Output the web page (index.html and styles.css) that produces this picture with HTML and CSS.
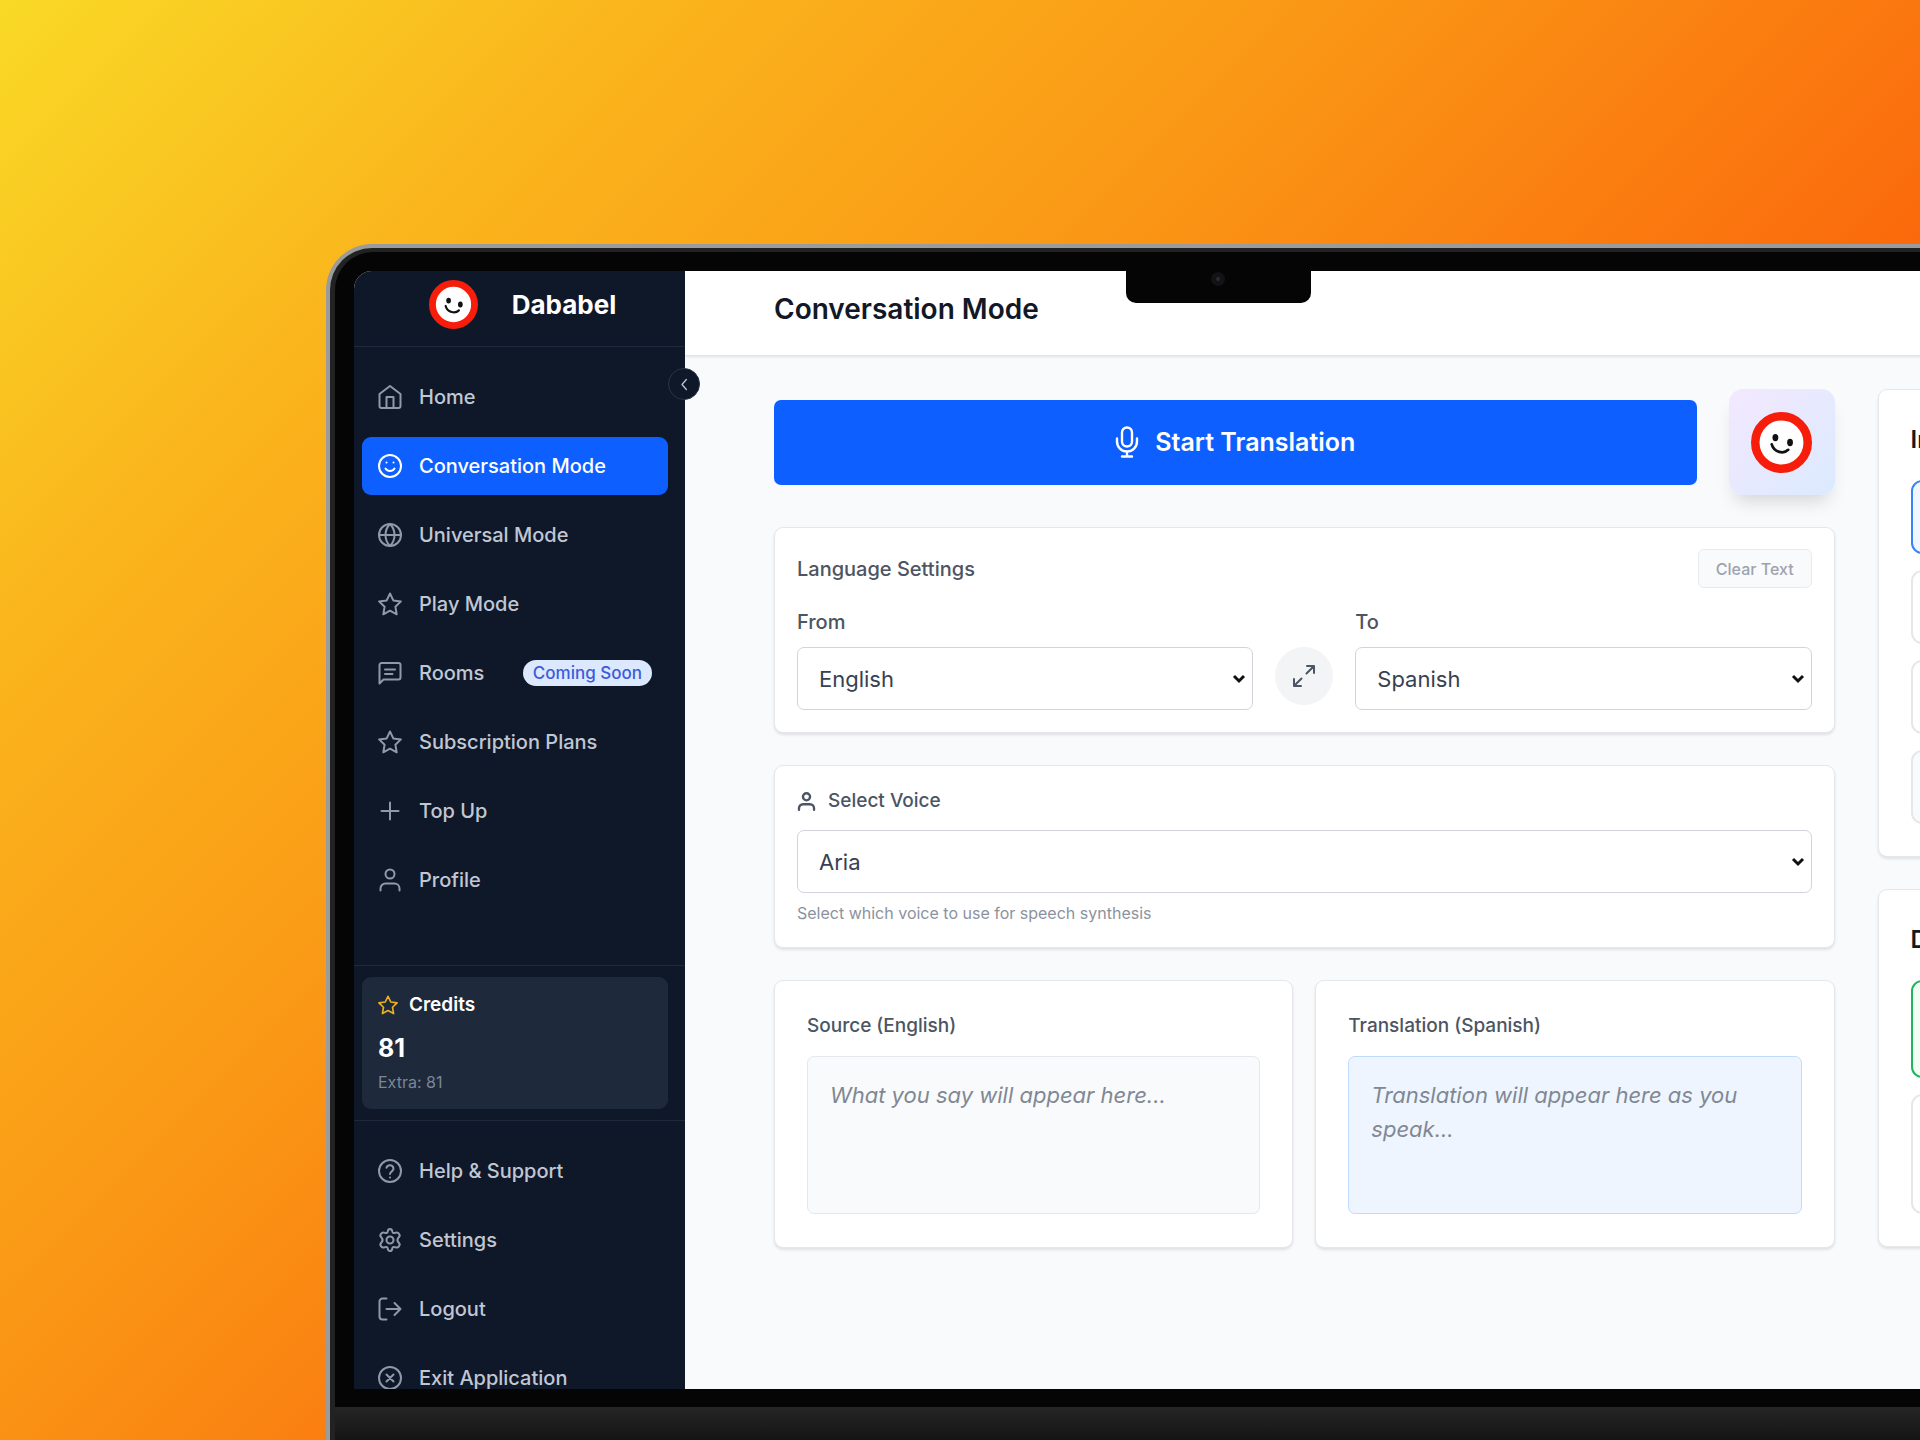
FILE: index.html
```html
<!DOCTYPE html>
<html lang="en">
<head>
    <meta charset="UTF-8">
    <meta name="viewport" content="width=device-width, initial-scale=1.0">
    <title>Dababel - Conversation Mode</title>
    <link rel="stylesheet" href="styles.css">
</head>
<body>
    <div class="laptop">
        <div class="bezel">
            <div class="notch"><span class="camera"></span></div>
            <div class="screen">
                <aside class="sidebar">
                    <div class="brand">
                        <svg class="brand-logo" viewBox="0 0 50 50">
                            <circle cx="25" cy="25" r="21.5" fill="#fff" stroke="#f71d0b" stroke-width="7"/>
                            <ellipse cx="20" cy="21" rx="2.4" ry="3" fill="#111"/>
                            <ellipse cx="32" cy="25" rx="2.4" ry="3" fill="#111"/>
                            <path d="M17 26.500c2 7 10 8 13.500 4.500" fill="none" stroke="#111" stroke-width="2.200" stroke-linecap="round"/>
                        </svg>
                        <span class="brand-name">Dababel</span>
                    </div>

                    <button class="collapse" aria-label="Collapse sidebar">
                        <svg class="icon" viewBox="0 0 24 24"><path d="M15 4l-7 8 7 8"/></svg>
                    </button>

                    <nav class="nav nav-main">
                        <a class="nav-item" href="#">
                            <svg class="icon" viewBox="0 0 24 24"><path d="M1.500 9L12 1l10.500 8v12a2 2 0 0 1-2 2h-17a2 2 0 0 1-2-2z"/><path d="M8.500 23V12h7v11"/></svg>
                            <span>Home</span>
                        </a>
                        <a class="nav-item active" href="#">
                            <svg class="icon" viewBox="0 0 24 24"><circle cx="12" cy="12" r="11"/><path d="M7.500 14.500s1.500 2.500 4.500 2.500 4.500-2.500 4.500-2.500M8.500 8.500h.01M15.500 8.500h.01"/></svg>
                            <span>Conversation Mode</span>
                        </a>
                        <a class="nav-item" href="#">
                            <svg class="icon" viewBox="0 0 24 24"><circle cx="12" cy="12" r="11"/><path d="M1 12h22M12 1c6 6 6 16 0 22M12 1c-6 6-6 16 0 22"/></svg>
                            <span>Universal Mode</span>
                        </a>
                        <a class="nav-item" href="#">
                            <svg class="icon" viewBox="0 0 24 24"><path d="M12 1.500l3.300 6.900 7.600 1-5.500 5.300 1.300 7.600-6.700-3.600-6.700 3.600 1.300-7.600L1.100 9.400l7.600-1z"/></svg>
                            <span>Play Mode</span>
                        </a>
                        <a class="nav-item" href="#">
                            <svg class="icon" viewBox="0 0 24 24"><path d="M1.500 22.500V4a2 2 0 0 1 2-2h17a2 2 0 0 1 2 2v12.500a2 2 0 0 1-2 2h-15z"/><path d="M7 8.500h10M7 13h7.500"/></svg>
                            <span>Rooms</span>
                            <span class="badge">Coming Soon</span>
                        </a>
                        <a class="nav-item" href="#">
                            <svg class="icon" viewBox="0 0 24 24"><path d="M12 1.500l3.300 6.900 7.600 1-5.500 5.300 1.300 7.600-6.700-3.600-6.700 3.600 1.300-7.600L1.100 9.400l7.600-1z"/></svg>
                            <span>Subscription Plans</span>
                        </a>
                        <a class="nav-item" href="#">
                            <svg class="icon" viewBox="0 0 24 24"><path d="M12 3.500v17M3.500 12h17"/></svg>
                            <span>Top Up</span>
                        </a>
                        <a class="nav-item" href="#">
                            <svg class="icon" viewBox="0 0 24 24"><circle cx="12" cy="6" r="4.500"/><path d="M2.500 22.500v-2a5 5 0 0 1 5-5h9a5 5 0 0 1 5 5v2"/></svg>
                            <span>Profile</span>
                        </a>
                    </nav>

                    <div class="credits-wrap">
                        <div class="credits">
                            <div class="credits-title">
                                <svg class="icon" viewBox="0 0 24 24"><path d="M12 1.500l3.300 6.900 7.600 1-5.500 5.300 1.300 7.600-6.700-3.600-6.700 3.600 1.300-7.600L1.100 9.400l7.600-1z"/></svg>
                                <span>Credits</span>
                            </div>
                            <div class="credits-value">81</div>
                            <div class="credits-extra">Extra: 81</div>
                        </div>
                    </div>

                    <nav class="nav">
                        <a class="nav-item" href="#">
                            <svg class="icon" viewBox="0 0 24 24"><circle cx="12" cy="12" r="11"/><path d="M8.500 8.700a3.600 3.600 0 0 1 7 1.100c0 2.400-3.500 3-3.500 5.200M12 18.500h.01"/></svg>
                            <span>Help &amp; Support</span>
                        </a>
                        <a class="nav-item" href="#">
                            <svg class="icon" viewBox="0 0 24 24"><circle cx="12" cy="12" r="3.500"/><path d="M9.700 3.500Q10 1 12 1t2.300 2.500q.3 2.200 2.600 1.400Q19.500 3.700 20.900 5.600q1.700 2.100-.3 3.800-2.400 2.600 0 5.200 2 1.700.3 3.800-1.400 1.900-4 .7-2.300-.8-2.600 1.400Q14 23 12 23t-2.300-2.500q-.3-2.200-2.600-1.400-2.600 1.200-4-.7-1.700-2.100.3-3.800 2.400-2.600 0-5.200-2-1.700-.3-3.800 1.400-1.900 4-.7 2.300.8 2.600-1.400z"/></svg>
                            <span>Settings</span>
                        </a>
                        <a class="nav-item" href="#">
                            <svg class="icon" viewBox="0 0 24 24"><path d="M8.500 1.500h-4a3 3 0 0 0-3 3v15a3 3 0 0 0 3 3h4M8.500 12h14M16.500 6l6 6-6 6"/></svg>
                            <span>Logout</span>
                        </a>
                        <a class="nav-item" href="#">
                            <svg class="icon" viewBox="0 0 24 24"><circle cx="12" cy="12" r="11"/><path d="M8.500 8.500l7 7M15.500 8.500l-7 7"/></svg>
                            <span>Exit Application</span>
                        </a>
                    </nav>
                </aside>

                <main class="main">
                    <header class="page-header">
                        <h1>Conversation Mode</h1>
                    </header>

                    <div class="content">
                        <div class="column">
                            <div class="start-row">
                                <button class="start-button">
                                    <svg class="mic" viewBox="0 0 24 32"><rect x="7" y="1.500" width="10" height="19" rx="5"/><path d="M2 12.500v3a10 10 0 0 0 20 0v-3M12 26v4M7 30.500h10"/></svg>
                                    <span>Start Translation</span>
                                </button>
                                <div class="avatar">
                                    <svg viewBox="0 0 50 50">
                                        <circle cx="25" cy="25" r="21.500" fill="#fff" stroke="#f71d0b" stroke-width="7"/>
                                        <ellipse cx="20" cy="21" rx="2.400" ry="3" fill="#111"/>
                                        <ellipse cx="32" cy="25" rx="2.400" ry="3" fill="#111"/>
                                        <path d="M17 26.500c2 7 10 8 13.500 4.500" fill="none" stroke="#111" stroke-width="2.200" stroke-linecap="round"/>
                                    </svg>
                                </div>
                            </div>

                            <section class="card">
                                <div class="card-head">
                                    <h2 class="label">Language Settings</h2>
                                    <button class="clear-button">Clear Text</button>
                                </div>
                                <div class="languages">
                                    <div class="field">
                                        <label class="label" for="from">From</label>
                                        <select id="from"><option>English</option></select>
                                    </div>
                                    <button class="swap" aria-label="Swap languages">
                                        <svg class="icon" viewBox="0 0 24 24"><path d="M14.500 9.500L22 2M15 2h7v7M9.500 14.500L2 22M2 15v7h7"/></svg>
                                    </button>
                                    <div class="field">
                                        <label class="label" for="to">To</label>
                                        <select id="to"><option>Spanish</option></select>
                                    </div>
                                </div>
                            </section>

                            <section class="card field">
                                <label class="label voice-label" for="voice">
                                    <svg class="icon" viewBox="0 0 24 24"><circle cx="12" cy="6" r="4.500"/><path d="M2.500 22.500v-2a5 5 0 0 1 5-5h9a5 5 0 0 1 5 5v2"/></svg>
                                    Select Voice
                                </label>
                                <select id="voice"><option>Aria</option></select>
                                <p class="hint">Select which voice to use for speech synthesis</p>
                            </section>

                            <div class="texts">
                                <section class="card text-card">
                                    <label class="label" for="source">Source (English)</label>
                                    <textarea id="source" placeholder="What you say will appear here..."></textarea>
                                </section>
                                <section class="card text-card">
                                    <label class="label" for="translation">Translation (Spanish)</label>
                                    <textarea id="translation" class="translated" placeholder="Translation will appear here as you speak..."></textarea>
                                </section>
                            </div>
                        </div>

                        <div class="column side">
                            <section class="card side-card">
                                <h2>In</h2>
                                <button class="option selected" aria-label="Option 1"></button>
                                <button class="option" aria-label="Option 2"></button>
                                <button class="option" aria-label="Option 3"></button>
                                <button class="option disabled" aria-label="Option 4"></button>
                            </section>
                            <section class="card side-card">
                                <h2>D</h2>
                                <button class="option tall green" aria-label="Option 1"></button>
                                <button class="option taller" aria-label="Option 2"></button>
                            </section>
                        </div>
                    </div>
                </main>
            </div>
        </div>
        <div class="chin"></div>
    </div>
</body>
</html>
```
FILE: styles.css
```css
* {
    box-sizing: border-box;
}

body {
    margin: 0;
    height: 100vh;
    padding: 244px 0 0 326px;
    overflow: hidden;
    background: linear-gradient(135deg, #f9d926 0%, #fab41c 20%, #fa9a16 38%, #fa680c 65%, #f75a0c 100%);
    font-family: "Inter", "Liberation Sans", sans-serif;
    color: #374151;
}

h1,
h2,
p {
    margin: 0;
}

button,
select,
textarea {
    font-family: inherit;
    color: inherit;
}

.icon {
    width: 24px;
    height: 24px;
    flex: none;
    fill: none;
    stroke: currentColor;
    stroke-width: 2;
    stroke-linecap: round;
    stroke-linejoin: round;
}

/* Laptop frame */

.laptop {
    display: flex;
    flex-direction: column;
    width: 93vw;
    height: 100%;
    border: 4px solid #9a9b9d;
    border-bottom: none;
    border-radius: 46px 46px 0 0;
    background: #222;
    padding: 4px 5px 0;
}

.bezel {
    position: relative;
    flex: 1;
    min-height: 0;
    padding: 19px 19px 18px;
    background: #050505;
    border-radius: 38px 38px 0 0;
}

.notch {
    position: absolute;
    top: 18px;
    left: 50%;
    z-index: 2;
    width: 185px;
    height: 33px;
    margin-left: -93px;
    padding-top: 2px;
    background: #050505;
    border-radius: 0 0 10px 10px;
}

.camera {
    display: block;
    width: 14px;
    height: 14px;
    margin: 0 auto;
    border: 5px solid #131315;
    border-radius: 50%;
    background: #2b2b30;
}

.chin {
    flex: none;
    height: 33px;
    background: linear-gradient(#262626, #141414);
}

.screen {
    display: flex;
    height: 100%;
    overflow: hidden;
    border-radius: 18px 18px 0 0;
    background: #f9fafb;
}

/* Sidebar */

.sidebar {
    position: relative;
    flex: none;
    width: 331px;
    background: #0f1829;
    color: #c0c7d3;
}

.brand {
    display: flex;
    align-items: center;
    justify-content: center;
    gap: 34px;
    height: 76px;
    padding: 0 0 8px 6px;
    border-bottom: 1px solid #1e293b;
}

.brand-logo {
    width: 49px;
    height: 49px;
}

.brand-name {
    font-size: 26px;
    font-weight: 700;
    color: #fff;
}

.collapse {
    position: absolute;
    top: 97px;
    right: -15px;
    z-index: 1;
    display: flex;
    align-items: center;
    justify-content: center;
    width: 32px;
    height: 32px;
    padding: 0;
    border: 1px solid #283447;
    border-radius: 50%;
    background: #0f1829;
    color: #c0c7d3;
}

.collapse .icon {
    width: 15px;
    height: 15px;
}

.nav {
    display: flex;
    flex-direction: column;
    gap: 11px;
    padding: 21px 17px 21px 8px;
}

.nav-main {
    padding-bottom: 56px;
}

.nav-item {
    display: flex;
    align-items: center;
    gap: 17px;
    height: 58px;
    padding: 0 16px;
    border-radius: 9px;
    font-size: 20px;
    font-weight: 500;
    color: inherit;
    text-decoration: none;
}

.nav-item .icon {
    color: #8f99a9;
}

.nav-item.active,
.nav-item.active .icon {
    background: #0d5fff;
    color: #fff;
}

.badge {
    margin-left: auto;
    padding: 0 10px;
    border-radius: 13px;
    background: #dbe8fe;
    color: #3b5bdb;
    font-size: 17px;
    line-height: 26px;
    white-space: nowrap;
}

.credits-wrap {
    padding: 11px 17px 11px 8px;
    border-top: 1px solid #1e293b;
    border-bottom: 1px solid #1e293b;
}

.credits {
    padding: 14px 16px;
    border-radius: 9px;
    background: #1e293b;
}

.credits-title {
    display: flex;
    align-items: center;
    gap: 11px;
    font-size: 19px;
    font-weight: 600;
    line-height: 28px;
    color: #fff;
}

.credits-title .icon {
    width: 20px;
    height: 20px;
    color: #eab020;
}

.credits-value {
    margin-top: 11px;
    font-size: 25px;
    font-weight: 700;
    line-height: 36px;
    color: #fff;
}

.credits-extra {
    margin-top: 4px;
    font-size: 16px;
    line-height: 25px;
    color: #7b8698;
}

/* Main area */

.main {
    flex: 1;
    min-width: 0;
}

.page-header {
    display: flex;
    align-items: center;
    height: 85px;
    padding: 0 89px 8px;
    border-bottom: 1px solid #e2e4e7;
    background: #fff;
    box-shadow: 0 1px 3px rgba(0, 0, 0, 0.1);
}

.page-header h1 {
    font-size: 28px;
    font-weight: 600;
    color: #111827;
}

.content {
    display: grid;
    grid-template-columns: minmax(0, 1fr) 182px;
    align-items: start;
    gap: 43px;
    padding: 33px 24px 33px 89px;
}

.column {
    display: flex;
    flex-direction: column;
    gap: 32px;
}

.start-row {
    display: flex;
    align-items: center;
    gap: 32px;
}

.start-button {
    flex: 1;
    display: flex;
    align-items: center;
    justify-content: center;
    gap: 16px;
    height: 85px;
    border: none;
    border-radius: 7px;
    background: #0d5fff;
    color: #fff;
    font-size: 25px;
    font-weight: 600;
}

.mic {
    width: 24px;
    height: 32px;
    fill: none;
    stroke: currentColor;
    stroke-width: 2.4;
    stroke-linecap: round;
}

.avatar {
    display: flex;
    align-items: center;
    justify-content: center;
    width: 106px;
    height: 106px;
    border-radius: 14px;
    background: linear-gradient(135deg, #f3e8ff, #dbeafe);
    box-shadow: 0 12px 18px -6px rgba(0, 0, 0, 0.15);
}

.avatar svg {
    width: 61px;
    height: 61px;
}

.card {
    padding: 21px 22px 22px;
    border: 1px solid #e5e7eb;
    border-radius: 9px;
    background: #fff;
    box-shadow: 0 2px 3px rgba(0, 0, 0, 0.1);
}

.card-head {
    display: flex;
    align-items: center;
    justify-content: space-between;
    margin-bottom: 20px;
}

.label {
    font-size: 19px;
    font-weight: 500;
    line-height: 28px;
    color: #4b5563;
}

.card-head .label,
.languages .label {
    font-size: 20px;
}

.clear-button {
    height: 39px;
    padding: 0 17px;
    border: 1px solid #e8eaed;
    border-radius: 6px;
    background: #f9fafb;
    color: #9ca3af;
    font-size: 16px;
    font-weight: 500;
}

.languages {
    display: flex;
    align-items: flex-end;
    gap: 22px;
}

.field {
    flex: 1;
    display: flex;
    flex-direction: column;
}

select {
    appearance: none;
    width: 100%;
    height: 63px;
    margin-top: 11px;
    padding: 0 40px 0 21px;
    border: 1px solid #d1d5db;
    border-radius: 7px;
    background: #fff url("data:image/svg+xml,%3Csvg xmlns='http://www.w3.org/2000/svg' width='14' height='10'%3E%3Cpath d='M2 2l5 5 5-5' fill='none' stroke='%23111' stroke-width='3'/%3E%3C/svg%3E") no-repeat right 6px center;
    font-size: 22px;
}

.swap {
    display: flex;
    align-items: center;
    justify-content: center;
    width: 58px;
    height: 58px;
    margin-bottom: 5px;
    padding: 0;
    border: none;
    border-radius: 50%;
    background: #f3f4f6;
    color: #4b5563;
}

.voice-label {
    display: flex;
    align-items: center;
    gap: 12px;
}

.voice-label .icon {
    width: 19px;
    height: 19px;
    stroke-width: 3;
}

.voice-label + select {
    margin-top: 15px;
}

.hint {
    margin-top: 8px;
    font-size: 16px;
    line-height: 24px;
    color: #8b929e;
}

.texts {
    display: grid;
    grid-template-columns: 1fr 1fr;
    gap: 22px;
}

.text-card {
    display: flex;
    flex-direction: column;
    gap: 16px;
    padding: 31px 32px 33px;
}

textarea {
    display: block;
    width: 100%;
    height: 158px;
    padding: 21px 22px;
    border: 1px solid #e5e7eb;
    border-radius: 7px;
    background: #f9fafb;
    font-size: 22px;
    line-height: 34px;
    resize: none;
}

textarea::placeholder {
    color: #808894;
    font-style: italic;
}

.translated {
    border-color: #bfdbfe;
    background: #eef5ff;
}

/* Right column */

.side-card {
    display: flex;
    flex-direction: column;
    gap: 16px;
    padding: 32px;
}

.side-card h2 {
    margin-bottom: 6px;
    font-size: 24px;
    font-weight: 600;
    line-height: 36px;
    color: #111827;
}

.option {
    height: 74px;
    border: 2px solid #e5e7eb;
    border-radius: 11px;
    background: #fff;
}

.option.selected {
    border-color: #3b82f6;
    background: #eff6ff;
}

.option.disabled {
    background: #f9fafb;
}

.option.tall {
    height: 98px;
}

.option.taller {
    height: 120px;
}

.option.green {
    border-color: #22b35e;
    background: #f0fdf4;
}
```
